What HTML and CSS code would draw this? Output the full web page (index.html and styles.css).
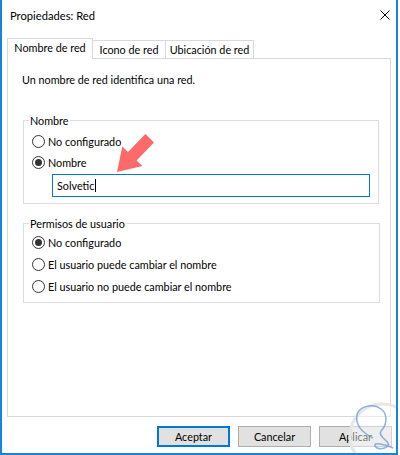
FILE: index.html
```html
<!DOCTYPE html>
<html lang="es">
<head>
<meta charset="utf-8">
<title>Propiedades: Red</title>
<link rel="stylesheet" href="styles.css">
</head>
<body>
<div class="window">
  <div class="titlebar">
    <span class="title">Propiedades: Red</span>
    <svg class="close" width="10" height="10" viewBox="0 0 10 10"><path d="M0.5 0.5 L9.5 9.5 M9.5 0.5 L0.5 9.5" stroke="#000" stroke-width="1" fill="none"/></svg>
  </div>
  <div class="content">
    <div class="tabs">
      <div class="tab active">Nombre de red</div>
      <div class="tab t2">Icono de red</div>
      <div class="tab t3">Ubicación de red</div>
    </div>
    <div class="panel">
      <p class="intro">Un nombre de red identifica una red.</p>
      <fieldset class="group g1">
        <legend>Nombre</legend>
        <div class="radio"><span class="circle"></span><span>No configurado</span></div>
        <div class="radio checked"><span class="circle"></span><span>Nombre</span></div>
        <div class="textbox">Solvetic<span class="caret"></span></div>
      </fieldset>
      <fieldset class="group g2">
        <legend>Permisos de usuario</legend>
        <div class="radio r2 checked"><span class="circle"></span><span>No configurado</span></div>
        <div class="radio r2"><span class="circle"></span><span>El usuario puede cambiar el nombre</span></div>
        <div class="radio r2"><span class="circle"></span><span>El usuario no puede cambiar el nombre</span></div>
      </fieldset>
    </div>
    <div class="buttons">
      <div class="btn default">Aceptar</div>
      <div class="btn">Cancelar</div>
      <div class="btn">Aplicar</div>
    </div>
  </div>
  <svg class="arrow" width="50" height="50" viewBox="0 0 50 50"><polygon points="7,47 12.3,21.5 18,27 35.4,9.1 44,17.5 26.6,35.4 32.4,40.9" fill="#fc6a6a"/></svg>
  <svg class="watermark" width="60" height="57" viewBox="0 0 60 57">
    <circle cx="42" cy="38" r="32" fill="rgba(255,255,255,0.45)" stroke="#e6e6e6" stroke-width="3"/>
    <path d="M33 40 C23 35 15 27 17 17 C19 8 33 5 41 11 C49 17 46 28 41 33 C38 37 45 41 48 45 C51 50 38 53 35 48 C33 44 45 46 53 50" fill="none" stroke="#6b98d2" stroke-width="1.5" opacity="0.75"/>
  </svg>
</div>
</body>
</html>
```
FILE: styles.css
```css
html, body {
  margin: 0;
  padding: 0;
  background: #ffffff;
}
body {
  width: 400px;
  height: 455px;
  overflow: hidden;
  font-family: Lato, "Noto Sans", sans-serif;
  font-size: 10.8px;
  line-height: 15px;
  color: #000;
}
.window {
  position: relative;
  width: 398px;
  height: 455px;
  box-sizing: border-box;
  border-left: 2px solid #1883d7;
  border-right: 2px solid #1883d7;
  border-bottom: 2px solid #1883d7;
  background: #fff;
  display: flex;
  flex-direction: column;
  overflow: hidden;
}
.titlebar {
  height: 30px;
  flex: none;
  display: flex;
  align-items: center;
  justify-content: space-between;
  padding: 0 6px 0 8px;
}
.title {
  font-size: 11.2px;
  padding-top: 1px;
}
.close {
  display: block;
}
.content {
  padding: 8px 5px 0 5px;
  display: flex;
  flex-direction: column;
}
.tabs {
  display: flex;
  align-items: flex-end;
  height: 20px;
}
.tab {
  box-sizing: border-box;
  border: 1px solid #d9d9d9;
  border-bottom: none;
  background: #fff;
  text-align: center;
  white-space: nowrap;
}
.tab.active {
  width: 86px;
  height: 21px;
  margin-bottom: -1px;
  line-height: 17px;
  position: relative;
  z-index: 1;
}
.tab.t2 {
  width: 74px;
  height: 18px;
  margin-left: -1px;
  padding-top: 1px;
}
.tab.t3 {
  width: 89px;
  height: 18px;
  margin-left: -1px;
  padding-top: 1px;
}
.panel {
  box-sizing: border-box;
  height: 359px;
  border: 1px solid #d9d9d9;
  background: #fff;
}
.intro {
  margin: 0;
  padding: 13px 0 0 14px;
}
.group {
  margin: 0 0 0 15px;
  padding: 0;
  border: 1px solid #dcdcdc;
  box-sizing: border-box;
  min-width: 0;
}
.group legend {
  margin-left: 5px;
  padding: 0 1px;
  line-height: 15px;
}
.g1 {
  width: 356px;
  margin-top: 26px;
  padding: 3px 0 6px 0;
}
.g2 {
  width: 357px;
  margin-top: 12px;
  padding: 0 0 5px 0;
}
.radio {
  display: flex;
  align-items: center;
  height: 21px;
  padding-left: 8px;
  gap: 3px;
  white-space: nowrap;
}
.radio.r2 {
  height: 22px;
}
.circle {
  box-sizing: border-box;
  width: 13px;
  height: 13px;
  border: 1px solid #333;
  border-radius: 50%;
  background: #fff;
  display: grid;
  place-items: center;
  flex: none;
}
.checked .circle::after {
  content: "";
  width: 7px;
  height: 7px;
  border-radius: 50%;
  background: #333;
}
.textbox {
  box-sizing: border-box;
  margin: 1px 0 0 28px;
  width: 318px;
  height: 23px;
  border: 1px solid #0078d7;
  padding-left: 4px;
  line-height: 21px;
  display: flex;
  align-items: center;
}
.caret {
  display: inline-block;
  width: 1px;
  height: 13px;
  background: #000;
  margin-left: 1px;
}
.buttons {
  display: flex;
  justify-content: flex-end;
  gap: 8px;
  margin-top: 9px;
  margin-right: -1px;
}
.btn {
  box-sizing: border-box;
  width: 73px;
  height: 21px;
  border: 1px solid #adadad;
  background: #e1e1e1;
  text-align: center;
  line-height: 19px;
}
.btn.default {
  border: 2px solid #0078d7;
  line-height: 17px;
}
.arrow {
  position: absolute;
  left: 108px;
  top: 125px;
}
.watermark {
  position: absolute;
  left: 338px;
  top: 398px;
}
```
